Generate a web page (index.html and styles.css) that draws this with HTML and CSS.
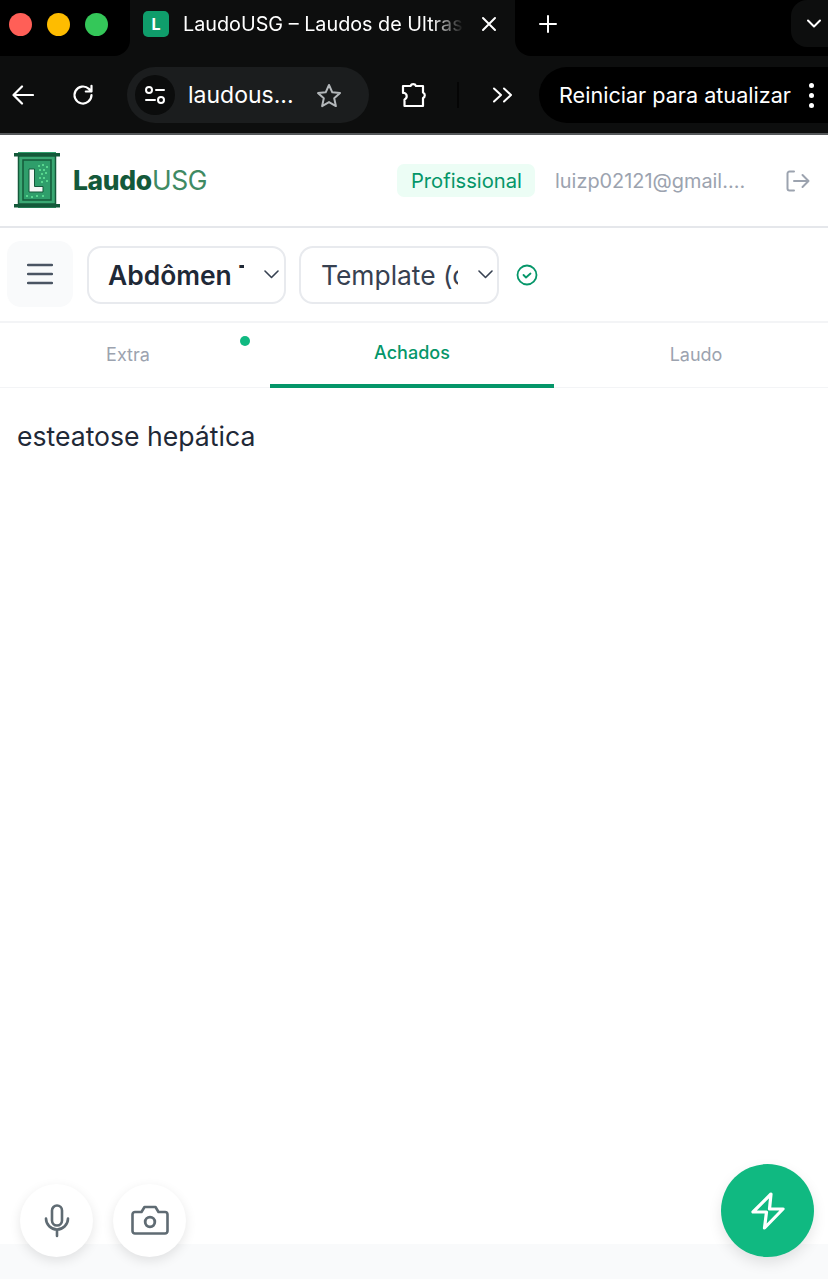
FILE: index.html
```html
<!DOCTYPE html>
<html lang="pt-BR">
<head>
  <meta charset="UTF-8">
  <meta name="viewport" content="width=device-width, initial-scale=1.0">
  <title>LaudoUSG</title>
  <link rel="stylesheet" href="styles.css">
</head>
<body>

  <!-- browser chrome -->
  <div class="tabstrip">
    <div class="lights">
      <span class="light red"></span>
      <span class="light yellow"></span>
      <span class="light green"></span>
    </div>
    <div class="tab">
      <span class="favicon">L</span>
      <span class="tab-title">LaudoUSG – Laudos de Ultrassom</span>
      <svg class="tab-close" width="16" height="16" viewBox="0 0 16 16"><path d="M2 2l12 12M14 2L2 14" stroke="#fff" stroke-width="2" stroke-linecap="round"/></svg>
    </div>
    <div class="strip-rest">
      <svg class="new-tab" width="18" height="18" viewBox="0 0 18 18"><path d="M9 1v16M1 9h16" stroke="#fff" stroke-width="2" stroke-linecap="round"/></svg>
      <div class="tab-search">
        <svg width="14" height="9" viewBox="0 0 14 9"><path d="M1 1.500l6 6 6-6" fill="none" stroke="#fff" stroke-width="2" stroke-linecap="round" stroke-linejoin="round"/></svg>
      </div>
    </div>
  </div>

  <div class="browserbar">
    <svg class="nav-back" width="22" height="20" viewBox="0 0 22 20"><path d="M21 10H2M10 1.500L1.500 10l8.500 8.500" fill="none" stroke="#fff" stroke-width="2.200" stroke-linecap="round" stroke-linejoin="round"/></svg>
    <svg class="nav-reload" width="22" height="22" viewBox="0 0 22 22"><path d="M19.500 11a8.500 8.500 0 1 1-2.600-6.100L19.500 7.500M19.500 1.800v5.700h-5.700" fill="none" stroke="#fff" stroke-width="2.200" stroke-linecap="round" stroke-linejoin="round"/></svg>
    <div class="omnibox">
      <span class="site-info">
        <svg width="22" height="20" viewBox="0 0 22 20"><circle cx="5" cy="5" r="3" fill="none" stroke="#fff" stroke-width="2"/><path d="M12 5h8M2 15h9" stroke="#fff" stroke-width="2" stroke-linecap="round"/><circle cx="17" cy="15" r="3" fill="none" stroke="#fff" stroke-width="2"/></svg>
      </span>
      <span class="url">laudous...</span>
      <svg class="star" width="26" height="25" viewBox="0 0 26 25"><path d="M13 2l3.300 7.300 7.700.8-5.800 5.200 1.700 7.800-6.900-4-6.900 4 1.700-7.800L2 10.100l7.700-.8z" fill="none" stroke="#b4b8bb" stroke-width="2" stroke-linejoin="round"/></svg>
    </div>
    <svg class="puzzle" width="28" height="26" viewBox="0 0 28 26"><path d="M2 4h7.500a3 3 0 0 1 5.500 0H22v6.500a3 3 0 0 1 0 5.500V24H3.500V17.500a3.500 3.500 0 0 0 0-6.500H2z" fill="none" stroke="#fff" stroke-width="2.200" stroke-linejoin="round"/></svg>
    <span class="bar-sep"></span>
    <svg class="more-ext" width="22" height="16" viewBox="0 0 22 16"><path d="M2 1.500L9 8l-7 6.500M12 1.500L19 8l-7 6.500" fill="none" stroke="#fff" stroke-width="2" stroke-linecap="round" stroke-linejoin="round"/></svg>
    <div class="update-pill">
      <span class="update-text">Reiniciar para atualizar</span>
      <span class="dots"><i></i><i></i><i></i></span>
    </div>
  </div>

  <!-- app -->
  <header class="app-header">
    <svg class="logo" width="46" height="58" viewBox="0 0 46 58">
      <rect x="4" y="1" width="38" height="56" fill="#2f9e6b"/>
      <rect x="0" y="2" width="46" height="3.500" fill="#14593a"/>
      <rect x="0" y="53" width="46" height="3.500" fill="#14593a"/>
      <rect x="4.500" y="5" width="37" height="48" fill="#3aa873" stroke="#14593a" stroke-width="1.500"/>
      <rect x="9" y="9" width="28" height="40" fill="#2f9e6b" stroke="#14593a" stroke-width="1.500"/>
      <path d="M15 18h5.500v17.500H29V41H15z" fill="#f6f8f6" stroke="#14593a" stroke-width="1"/>
      <path d="M24 14h2v2h-2zM28 13h2v2h-2zM32 15h2v2h-2zM25 18h2v2h-2zM29 18h2v2h-2zM27 22h2v2h-2zM31 21h2v2h-2zM25 26h2v2h-2zM29 26h2v2h-2zM32 29h2v2h-2zM27 30h2v2h-2zM12 44h2v2h-2zM17 45h2v2h-2zM22 44h2v2h-2zM28 44h2v2h-2z" fill="#57d68e"/>
    </svg>
    <div class="brand"><b>Laudo</b><span>USG</span></div>
    <div class="header-right">
      <span class="plan">Profissional</span>
      <span class="email">luizp02121@gmail....</span>
      <svg class="logout" width="24" height="22" viewBox="0 0 24 22"><path d="M8 1.500H3.500a2 2 0 0 0-2 2v15a2 2 0 0 0 2 2H8M8 11h14.500M16.500 5l6 6-6 6" fill="none" stroke="#9ca3af" stroke-width="2" stroke-linecap="round" stroke-linejoin="round"/></svg>
    </div>
  </header>

  <div class="toolbar">
    <button class="menu-btn">
      <svg width="26" height="22" viewBox="0 0 26 22"><path d="M1 2h24M1 11h24M1 20h24" stroke="#4b5563" stroke-width="2.400" stroke-linecap="round"/></svg>
    </button>
    <div class="select exam">
      <span class="select-text">Abdômen Total</span>
      <svg width="15" height="9" viewBox="0 0 15 9"><path d="M1 1l6.500 6.500L14 1" fill="none" stroke="#374151" stroke-width="1.600" stroke-linecap="round" stroke-linejoin="round"/></svg>
    </div>
    <div class="select template">
      <span class="select-text">Template (opcional)</span>
      <svg width="15" height="9" viewBox="0 0 15 9"><path d="M1 1l6.500 6.500L14 1" fill="none" stroke="#374151" stroke-width="1.600" stroke-linecap="round" stroke-linejoin="round"/></svg>
    </div>
    <svg class="saved" width="22" height="22" viewBox="0 0 22 22"><circle cx="11" cy="11" r="9.500" fill="none" stroke="#059669" stroke-width="1.800"/><path d="M7.500 11l2.500 2.500 4.500-4" fill="none" stroke="#059669" stroke-width="1.800" stroke-linecap="round" stroke-linejoin="round"/></svg>
  </div>

  <nav class="tabs">
    <a class="tabs-item">Extra<span class="tab-dot"></span></a>
    <a class="tabs-item active">Achados</a>
    <a class="tabs-item">Laudo</a>
  </nav>

  <main class="content">
    <p class="findings">esteatose hepática</p>
  </main>

  <footer class="app-footer"></footer>

  <div class="float-left">
    <button class="round-btn">
      <svg width="26" height="34" viewBox="0 0 26 34"><rect x="8" y="1.500" width="10" height="20" rx="5" fill="none" stroke="#5f6b73" stroke-width="2.600"/><path d="M2 14.500a11 11 0 0 0 22 0M13 25.500V32" fill="none" stroke="#5f6b73" stroke-width="2.600" stroke-linecap="round"/></svg>
    </button>
    <button class="round-btn">
      <svg width="38" height="31" viewBox="0 0 38 31"><path d="M4 7h6.500l3-5h11l3 5H34a2.500 2.500 0 0 1 2.500 2.500V26a2.500 2.500 0 0 1-2.500 2.500H4A2.500 2.500 0 0 1 1.500 26V9.500A2.500 2.500 0 0 1 4 7z" fill="none" stroke="#5f6b73" stroke-width="2.600" stroke-linejoin="round"/><circle cx="19" cy="17" r="4.800" fill="none" stroke="#5f6b73" stroke-width="2.800"/></svg>
    </button>
  </div>
  <button class="fab">
    <svg width="34" height="38" viewBox="0 0 34 38"><path d="M20 2L2 20H15.500L13.500 36 32 17H18.500z" fill="none" stroke="#fff" stroke-width="3.200" stroke-linejoin="round" stroke-linecap="round"/></svg>
  </button>

</body>
</html>
```

FILE: styles.css
```css
* {
  box-sizing: border-box;
}
body {
  font-family: 'Inter', 'Liberation Sans', sans-serif;
  background-color: #fff;
  margin: 0;
  height: 1279px;
  overflow: hidden;
  display: flex;
  flex-direction: column;
  position: relative;
  color: #1f2937;
}
button {
  border: none;
  padding: 0;
  cursor: pointer;
}

/* browser chrome */
.tabstrip {
  display: flex;
  height: 56px;
  background-color: #0d0e0e;
}
.lights {
  width: 130px;
  padding: 0 0 8px 9px;
  display: flex;
  align-items: center;
  gap: 15px;
  background-color: #000;
  border-bottom-right-radius: 16px;
}
.light {
  width: 23px;
  height: 23px;
  border-radius: 50%;
}
.light.red { background-color: #ff5f57; }
.light.yellow { background-color: #febc00; }
.light.green { background-color: #34c759; }
.tab {
  width: 385px;
  padding: 0 18px 8px 13px;
  display: flex;
  align-items: center;
  background-color: #0d0e0e;
  color: #fff;
}
.favicon {
  flex: none;
  width: 26px;
  height: 26px;
  border-radius: 5px;
  background-color: #0f9d6b;
  display: flex;
  align-items: center;
  justify-content: center;
  font-size: 16px;
  font-weight: 700;
}
.tab-title {
  width: 281px;
  margin-left: 14px;
  overflow: hidden;
  white-space: nowrap;
  font-size: 19.800px;
  -webkit-mask-image: linear-gradient(to right, #000 88%, transparent);
  mask-image: linear-gradient(to right, #000 88%, transparent);
}
.tab-close {
  margin-left: 17px;
  flex: none;
}
.strip-rest {
  flex: 1;
  display: flex;
  align-items: flex-start;
  justify-content: space-between;
  background-color: #000;
  border-bottom-left-radius: 16px;
}
.new-tab {
  margin: 15px 0 0 24px;
}
.tab-search {
  width: 37px;
  height: 47px;
  background-color: #0d0e0e;
  border-radius: 16px 0 0 16px;
  padding-left: 16px;
  display: flex;
  align-items: center;
}
.browserbar {
  height: 79px;
  padding: 12px 0 11px 12px;
  display: flex;
  align-items: center;
  background-color: #0d0e0e;
  border-bottom: 2px solid #55585a;
  color: #fff;
}
.nav-back { flex: none; }
.nav-reload { margin-left: 38px; flex: none; }
.omnibox {
  width: 242px;
  height: 56px;
  margin-left: 33px;
  padding-left: 8px;
  display: flex;
  align-items: center;
  flex: none;
  background-color: #1b1d1e;
  border-radius: 28px;
}
.site-info {
  width: 40px;
  height: 40px;
  border-radius: 50%;
  background-color: #0b0c0c;
  display: flex;
  align-items: center;
  justify-content: center;
  flex: none;
}
.url {
  width: 128px;
  margin-left: 13px;
  font-size: 23px;
  white-space: nowrap;
}
.star { flex: none; }
.puzzle { margin-left: 32px; flex: none; }
.bar-sep {
  width: 2px;
  height: 26px;
  margin-left: 28px;
  background-color: #050505;
  flex: none;
}
.more-ext { margin-left: 33px; flex: none; }
.update-pill {
  flex: 1;
  height: 56px;
  margin-left: 25px;
  padding-left: 20px;
  display: flex;
  align-items: center;
  background-color: #000;
  border-radius: 28px 0 0 28px;
}
.update-text {
  font-size: 21.600px;
  white-space: nowrap;
}
.dots {
  margin-left: 18px;
  display: flex;
  flex-direction: column;
  gap: 5px;
}
.dots i {
  display: block;
  width: 5px;
  height: 5px;
  border-radius: 50%;
  background-color: #fff;
}

/* app header */
.app-header {
  height: 93px;
  padding: 0 18px 2px 14px;
  display: flex;
  align-items: center;
  border-bottom: 2px solid #e5e7eb;
}
.logo { flex: none; }
.brand {
  margin-left: 13px;
  font-size: 26.400px;
  letter-spacing: -0.3px;
  color: #14593a;
}
.brand b { font-weight: 800; }
.brand span { font-weight: 400; color: #3f8a63; }
.header-right {
  margin-top: 2px;
  margin-left: auto;
  display: flex;
  align-items: center;
}
.plan {
  height: 33px;
  padding: 0 13px 0 14px;
  display: flex;
  align-items: center;
  border-radius: 7px;
  background-color: #ecfdf5;
  color: #059669;
  font-size: 20.200px;
  font-weight: 400;
}
.email {
  width: 192px;
  margin-left: 20px;
  font-size: 19.900px;
  color: #9ca3af;
  white-space: nowrap;
}
.logout {
  margin-left: 39px;
  flex: none;
}

/* selects row */
.toolbar {
  height: 95px;
  padding: 0 7px 2px;
  display: flex;
  align-items: center;
  border-bottom: 2px solid #f3f4f6;
}
.menu-btn {
  width: 66px;
  height: 66px;
  border-radius: 14px;
  background-color: #f9fafb;
  display: flex;
  align-items: center;
  justify-content: center;
  flex: none;
}
.select {
  height: 58px;
  margin-top: 2px;
  padding-left: 20px;
  display: flex;
  align-items: center;
  border: 2px solid #e8eaee;
  border-radius: 14px;
  background-color: #fff;
  flex: none;
}
.select svg {
  flex: none;
  margin-left: 19.500px;
}
.select-text {
  overflow: hidden;
  white-space: nowrap;
  font-size: 26.400px;
}
.exam {
  width: 199px;
  margin-left: 14px;
  padding-left: 19px;
}
.exam .select-text {
  width: 136px;
  font-weight: 600;
  color: #1f2937;
}
.template {
  width: 200px;
  margin-left: 13px;
}
.template .select-text {
  width: 137px;
  color: #374151;
}
.saved {
  margin-top: 2px;
  margin-left: 17px;
  flex: none;
}

/* tabs */
.tabs {
  height: 65px;
  margin-left: -14px;
  display: grid;
  grid-template-columns: repeat(3, 284px);
  border-bottom: 1px solid #f3f4f6;
}
.tabs-item {
  position: relative;
  padding-top: 21px;
  text-align: center;
  font-size: 18px;
  font-weight: 400;
  color: #9ca3af;
}
.tabs-item.active {
  padding-top: 19px;
  height: 65px;
  font-weight: 500;
  color: #059669;
  border-bottom: 4px solid #059669;
}
.tab-dot {
  position: absolute;
  top: 13px;
  right: 20px;
  width: 10px;
  height: 10px;
  border-radius: 50%;
  background-color: #10b981;
}

/* content */
.content {
  flex: 1;
  padding: 30px 17px;
}
.findings {
  margin: 0;
  font-size: 26.600px;
  line-height: 36px;
  color: #1f2937;
}
.app-footer {
  height: 35px;
  background-color: #f9fafb;
}

/* floating buttons */
.float-left {
  position: absolute;
  left: 20px;
  bottom: 22px;
  display: flex;
  gap: 20px;
}
.round-btn {
  width: 73px;
  height: 73px;
  border-radius: 50%;
  background-color: #fff;
  box-shadow: 0 4px 12px rgba(0, 0, 0, 0.1);
  display: flex;
  align-items: center;
  justify-content: center;
}
.fab {
  position: absolute;
  right: 14px;
  bottom: 22px;
  width: 93px;
  height: 93px;
  border-radius: 50%;
  background-color: #10b981;
  box-shadow: 0 6px 14px rgba(0, 0, 0, 0.1);
  display: flex;
  align-items: center;
  justify-content: center;
}
```
